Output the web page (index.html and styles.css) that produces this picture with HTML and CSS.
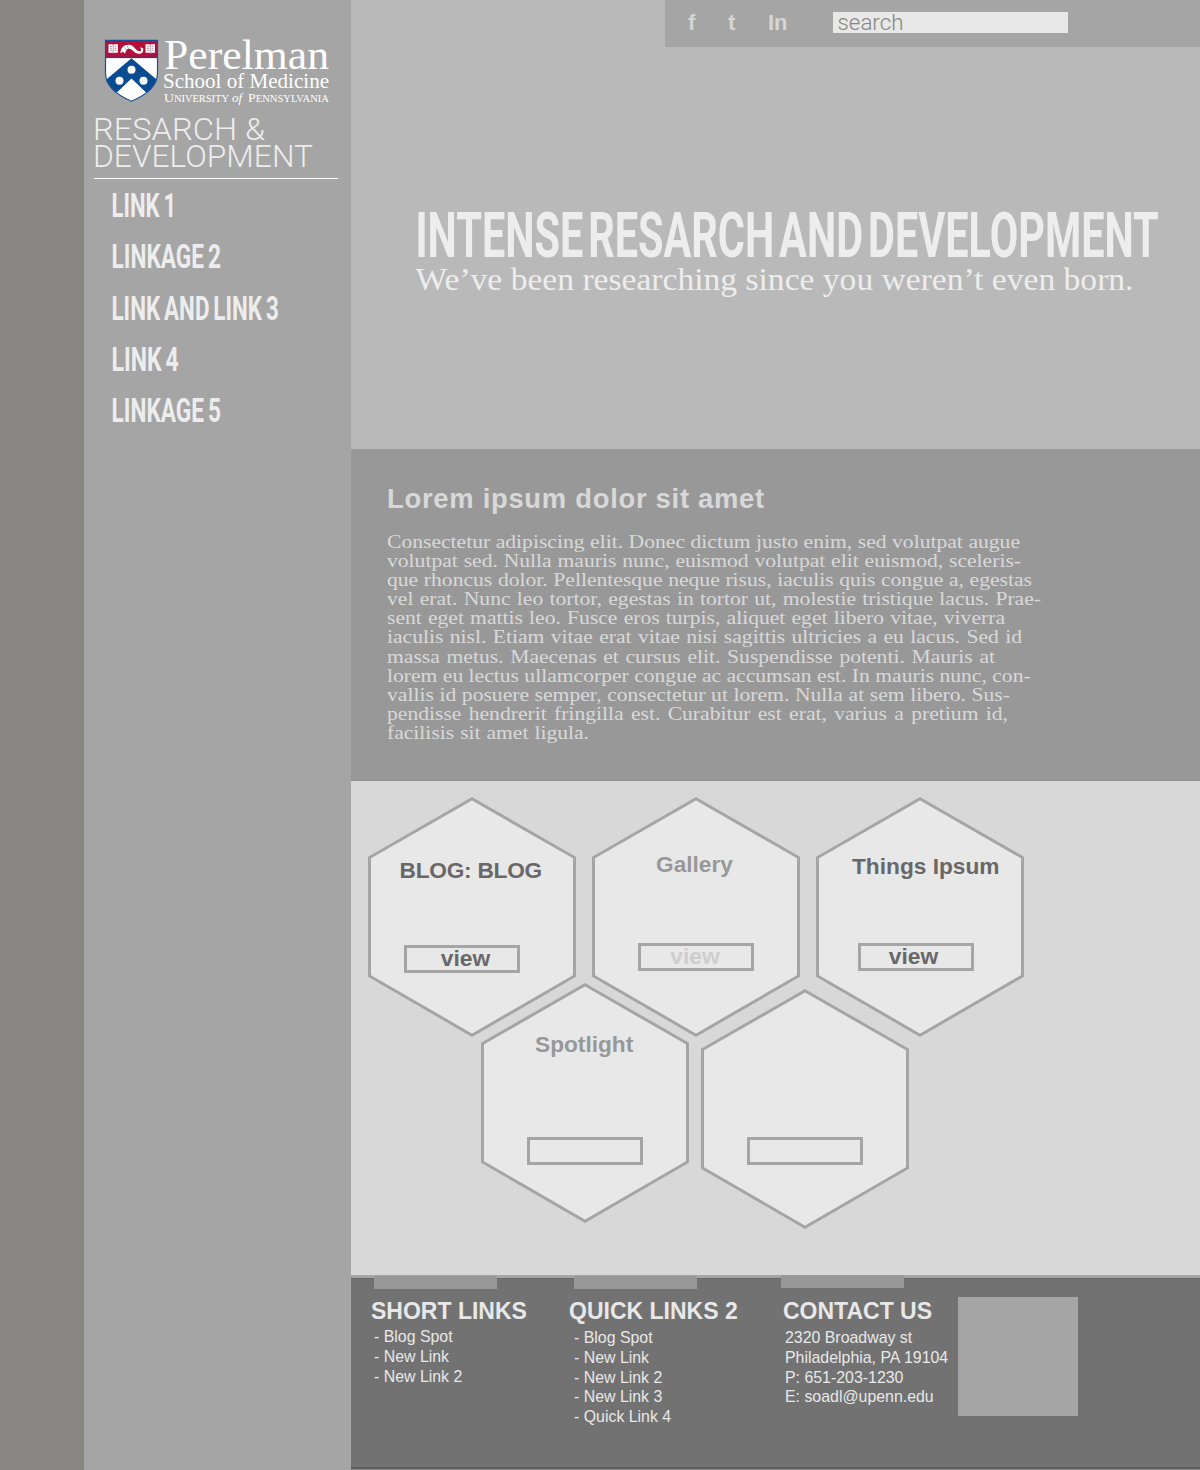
FILE: index.html
```html
<!DOCTYPE html>
<html lang="en">
<head>
<meta charset="utf-8">
<title>Perelman School of Medicine – Research &amp; Development</title>
<link rel="stylesheet" href="styles.css">
</head>
<body>
<div class="page">
  <aside class="sidebar">
    <svg class="logo" width="230" height="70" viewBox="0 0 230 70" role="img">
      <clipPath id="shield"><path d="M1 1H53V34C53 48 41 56 27 62C13 56 1 48 1 34Z"/></clipPath>
      <g transform="translate(.5 .3)">
      <path d="M1 1H53V34C53 48 41 56 27 62C13 56 1 48 1 34Z" fill="#fff"/>
      <g clip-path="url(#shield)">
        <rect x="1" y="1" width="52" height="17" fill="#b5103c"/>
        <path d="M27 19L53 41V64L27 39.500L1 64V41Z" fill="#0a4c92"/>
        <path d="M27 39.500L44 56L27 66L10 56Z" fill="#fff"/>
        <rect x="1" y="17.500" width="52" height="1.300" fill="#0a4c92"/>
      </g>
      <circle cx="27" cy="30.500" r="4" fill="#fff"/>
      <circle cx="15" cy="41.500" r="4" fill="#fff"/>
      <circle cx="39" cy="41.500" r="4" fill="#fff"/>
      <g fill="#fff">
        <path d="M4 5h4l.7.7.7-.7h4v8.500h-4l-.7.800-.7-.800H4zM41 5h4l.7.7.7-.7h4v8.500h-4l-.7.800-.7-.800H41z"/>
        <path d="M16 14c0-6 4-9 9-8.500 5 .5 6 6.500 10 6.500 2 0 2-2 .5-4l3 1c1 3-.5 5.500-4 5.500-5 0-6.500-5-10-5-2 0-3.500 2-4 5l-2-2z"/>
      </g>
      <path d="M8.700 5.500v8M45.700 5.500v8M5.500 7h2M5.500 9h2M5.500 11h2M10 7h2M10 9h2M10 11h2M42.500 7h2M42.500 9h2M42.500 11h2M47 7h2M47 9h2M47 11h2M20 8l2 3M23 7l1 3" stroke="#7d5270" stroke-width=".6"/>
      <path d="M1 1H53V34C53 48 41 56 27 62C13 56 1 48 1 34Z" fill="none" stroke="#1b4f91" stroke-width="1.200"/>
      </g>
      <g class="logo-type">
        <text x="60" y="30" font-size="43" textLength="165" lengthAdjust="spacingAndGlyphs">Perelman</text>
        <text x="59" y="48.500" font-size="21.500" textLength="166" lengthAdjust="spacingAndGlyphs">School of Medicine</text>
        <text x="60" y="62.500" font-size="12.500" textLength="65" lengthAdjust="spacingAndGlyphs">U<tspan font-size="9.500">NIVERSITY</tspan></text>
        <text x="128" y="62.500" font-size="13" font-style="italic">of</text>
        <text x="144" y="62.500" font-size="12.500" textLength="81" lengthAdjust="spacingAndGlyphs">P<tspan font-size="9.500">ENNSYLVANIA</tspan></text>
      </g>
    </svg>
    <svg class="dept" width="244" height="60">
      <text x="-1" y="27" textLength="172" lengthAdjust="spacingAndGlyphs">RESARCH &amp;</text>
      <text x="-1" y="54" textLength="220" lengthAdjust="spacingAndGlyphs">DEVELOPMENT</text>
    </svg>
    <nav class="menu">
      <a><svg width="200" height="34"><text transform="translate(-.5 29) scale(.68 1)" textLength="95" lengthAdjust="spacingAndGlyphs">LINK 1</text></svg></a>
      <a><svg width="200" height="34"><text transform="translate(-.5 29) scale(.68 1)" textLength="161" lengthAdjust="spacingAndGlyphs">LINKAGE 2</text></svg></a>
      <a><svg width="200" height="34"><text transform="translate(-.5 29.500) scale(.68 1)" textLength="246" lengthAdjust="spacingAndGlyphs">LINK AND LINK 3</text></svg></a>
      <a><svg width="200" height="34"><text transform="translate(-.5 29) scale(.68 1)" textLength="99" lengthAdjust="spacingAndGlyphs">LINK 4</text></svg></a>
      <a><svg width="200" height="34"><text transform="translate(-.5 29) scale(.68 1)" textLength="161" lengthAdjust="spacingAndGlyphs">LINKAGE 5</text></svg></a>
    </nav>
  </aside>

  <main class="main">
    <section class="hero">
      <div class="topbar">
        <a class="social">f</a><a class="social">t</a><a class="social">In</a>
        <div class="search"><svg width="100" height="21"><text x="4.500" y="18" textLength="66" lengthAdjust="spacingAndGlyphs">search</text></svg></div>
      </div>
      <svg class="headline" width="784" height="100">
        <text class="headline-title" transform="translate(-.5 57) scale(.68 1)" textLength="1093" lengthAdjust="spacingAndGlyphs">INTENSE RESARCH AND DEVELOPMENT</text>
        <text class="headline-sub" x="-.5" y="90" textLength="718" lengthAdjust="spacingAndGlyphs">We’ve been researching since you weren’t even born.</text>
      </svg>
    </section>

    <section class="intro">
      <h2>Lorem ipsum dolor sit amet</h2>
      <div class="copy">
        <span style="width:633px"><i>Consectetur adipiscing elit. Donec dictum justo enim, sed volutpat augue</i></span>
        <span style="width:634px"><i>volutpat sed. Nulla mauris nunc, euismod volutpat elit euismod, sceleris-</i></span>
        <span style="width:645px"><i>que rhoncus dolor. Pellentesque neque risus, iaculis quis congue a, egestas</i></span>
        <span style="width:654px"><i>vel erat. Nunc leo tortor, egestas in tortor ut, molestie tristique lacus. Prae-</i></span>
        <span style="width:618px"><i>sent eget mattis leo. Fusce eros turpis, aliquet eget libero vitae, viverra</i></span>
        <span style="width:635px"><i>iaculis nisl. Etiam vitae erat vitae nisi sagittis ultricies a eu lacus. Sed id</i></span>
        <span style="width:608px"><i>massa metus. Maecenas et cursus elit. Suspendisse potenti. Mauris at</i></span>
        <span style="width:643px"><i>lorem eu lectus ullamcorper congue ac accumsan est. In mauris nunc, con-</i></span>
        <span style="width:623px"><i>vallis id posuere semper, consectetur ut lorem. Nulla at sem libero. Sus-</i></span>
        <span style="width:621px"><i>pendisse hendrerit fringilla est. Curabitur est erat, varius a pretium id,</i></span>
        <span style="width:202px"><i>facilisis sit amet ligula.</i></span>
      </div>
    </section>

    <section class="tiles">
      <svg class="defs" width="0" height="0"><symbol id="hex" viewBox="0 0 208 240"><path d="M104 1.800L206.500 60.500V179L104 238.200L1.500 179V60.500Z" fill="#e8e8e8" stroke="#a5a5a5" stroke-width="3"/></symbol></svg>
      <div class="row">
        <article class="tile blog"><svg class="shape"><use href="#hex"/></svg><h3>BLOG: BLOG</h3><a class="view">view</a></article>
        <article class="tile gallery"><svg class="shape"><use href="#hex"/></svg><h3>Gallery</h3><a class="view">view</a></article>
        <article class="tile things"><svg class="shape"><use href="#hex"/></svg><h3>Things Ipsum</h3><a class="view">view</a></article>
      </div>
      <div class="row second">
        <article class="tile spotlight"><svg class="shape"><use href="#hex"/></svg><h3>Spotlight</h3><a class="view"></a></article>
        <article class="tile empty"><svg class="shape"><use href="#hex"/></svg><h3></h3><a class="view"></a></article>
      </div>
    </section>

    <footer class="footer">
      <section class="col short"><h4>SHORT LINKS</h4><ul><li>- Blog Spot</li><li>- New Link</li><li>- New Link 2</li></ul></section>
      <section class="col quick"><h4>QUICK LINKS 2</h4><ul><li>- Blog Spot</li><li>- New Link</li><li>- New Link 2</li><li>- New Link 3</li><li>- Quick Link 4</li></ul></section>
      <section class="col contact"><h4>CONTACT US</h4><ul><li>2320 Broadway st</li><li>Philadelphia, PA 19104</li><li>P: 651-203-1230</li><li>E: soadl@upenn.edu</li></ul></section>
      <div class="map"></div>
    </footer>
  </main>
</div>
</body>
</html>
```
FILE: styles.css
```css
* { box-sizing: border-box; }
body { margin: 0; font-family: "Liberation Sans", Arial, sans-serif; }
h2, h3, h4, ul { margin: 0; padding: 0; }
ul { list-style: none; }
svg { display: block; overflow: visible; }

.page {
  display: grid;
  grid-template-columns: 267px 849px;
  width: 1200px;
  height: 1470px;
  padding-left: 84px;
  background: #878683;
  overflow: hidden;
}

.sidebar { background: #a5a5a5; padding-top: 39px; }
.logo { margin-left: 20px; }
.logo-type { font-family: "Liberation Serif", serif; fill: #fff; }
.dept {
  margin: 4px 0 0 10px;
  height: 66px;
  border-bottom: 1px solid #fff;
  font: 300 31px Roboto, sans-serif;
  fill: #ededed;
}
.menu { display: flex; flex-direction: column; gap: 17.200px; padding: 9px 0 0 28px; }
.menu svg { font: 700 34px Roboto, sans-serif; fill: #ededed; }
.menu text { word-spacing: -2.500px; }

.main { display: flex; flex-direction: column; }

.hero { height: 449px; background: #b9b9b9; }
.topbar {
  display: flex;
  width: 535px;
  height: 47px;
  margin-left: 314px;
  padding: 12px 0 0 23px;
  background: #a5a5a5;
}
.social { width: 40px; font-size: 22px; font-weight: 700; line-height: 21px; color: #d6d6d6; }
.social:nth-child(3) { width: 65px; }
.search { width: 235px; height: 21px; background: #e8e8e8; }
.search svg { font: 300 22.500px Roboto, sans-serif; fill: #868480; }
.headline { margin: 153px 0 0 65px; }
.headline-title { font: 700 62px Roboto, sans-serif; word-spacing: -8px; fill: #ededed; }
.headline-sub { font: 32px "Liberation Serif", serif; fill: #ededed; }

.intro { height: 332px; padding: 33.500px 0 0 36px; background: #989898; border-bottom: 1px solid #909090; color: #d8d8d8; }
.intro h2 { font-size: 27.400px; line-height: 32px; letter-spacing: .720px; white-space: nowrap; }
.copy { padding-top: 17.500px; font: 19px/19.100px "Liberation Serif", serif; }
.copy span { display: block; height: 19.100px; }
.copy i {
  display: block;
  width: 87.950%;
  font-style: normal;
  white-space: nowrap;
  text-align-last: justify;
  transform: scaleX(1.137);
  transform-origin: 0 0;
}

.tiles { height: 494px; padding: 16px 0 0 17px; background: #d8d8d8; }
.defs { position: absolute; }
.row { display: flex; gap: 16px; }
.row.second { gap: 12px; margin: -54px 0 0 113px; }
.tile { position: relative; width: 208px; height: 240px; flex: none; }
.shape { position: absolute; inset: 0; width: 208px; height: 240px; }
.tile h3 { position: relative; height: 26px; font-size: 22.700px; line-height: 26px; white-space: nowrap; color: #686868; }
.view {
  position: relative;
  display: block;
  width: 116px;
  height: 28px;
  border: 3px solid #a5a5a5;
  font-size: 22.800px;
  font-weight: 700;
  line-height: 20px;
  text-align: center;
  color: #686868;
}
.blog { padding: 60px 0 0 31.500px; }
.tile.blog h3 { letter-spacing: -.250px; }
.blog .view { margin: 62px 0 0 4.500px; padding-left: 7px; }
.gallery { padding: 54px 0 0 64px; }
.tile.gallery h3, .tile.spotlight h3 { color: #989898; }
.gallery .view { margin: 66px 0 0 -18px; padding-right: 2px; color: #cecece; }
.things { padding: 56px 0 0 36px; }
.things .view { margin: 64px 0 0 6px; padding-right: 5px; }
.spotlight { padding: 48px 0 0 54px; }
.spotlight .view { margin: 80px 0 0 -8px; }
.empty { margin-top: 6px; padding: 42px 0 0 46px; }
.empty .view { margin-top: 80px; }

.footer {
  display: flex;
  height: 195px;
  background: linear-gradient(#a5a5a5 3px, #666 3px, #666 4px, #727272 4px, #727272 192px, #606060 192px, #606060 194px, #8a8a8a 194px);
  color: #e8e8e8;
}
.col::before { content: ""; display: block; width: 123px; height: 13px; background: #989898; }
.col h4 { font-size: 23px; line-height: 26px; white-space: nowrap; }
.col li { font-size: 15.900px; line-height: 19.750px; white-space: nowrap; }
.short { width: 200px; padding: 1px 0 0 23px; }
.short h4 { margin: 9px 0 0 -3px; }
.short ul { padding-top: 3px; }
.quick { width: 207px; padding: 1px 0 0 23px; }
.quick h4 { margin: 9px 0 0 -5px; }
.quick ul { padding-top: 4px; }
.contact { width: 200px; padding-left: 23px; }
.contact h4 { margin: 10px 0 0 2px; }
.contact ul { padding: 4px 0 0 4px; }
.map { width: 120px; height: 119px; margin-top: 22px; background: #a5a5a5; }
```
